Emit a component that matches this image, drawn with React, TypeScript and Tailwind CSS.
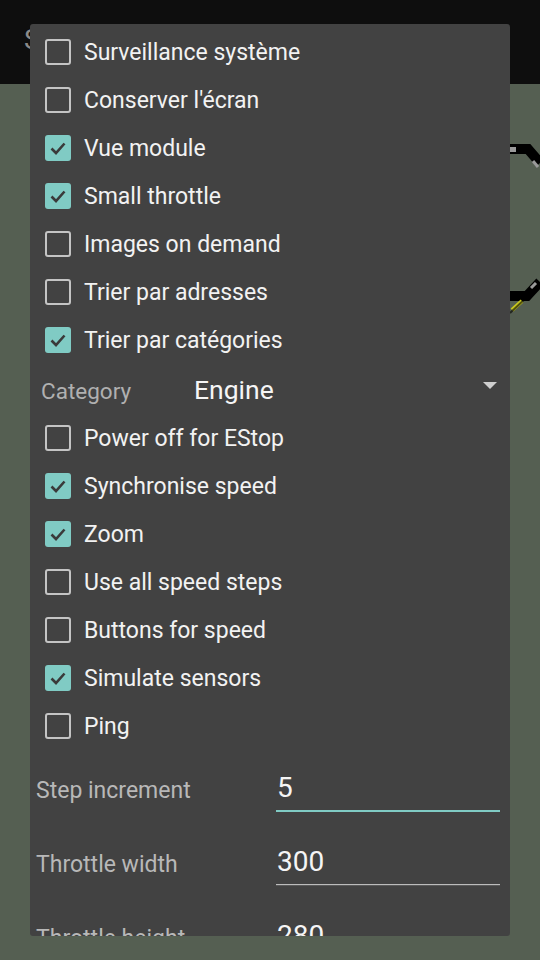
import React from "react";

const items1: [string, boolean][] = [
  ["Surveillance système", false],
  ["Conserver l'écran", false],
  ["Vue module", true],
  ["Small throttle", true],
  ["Images on demand", false],
  ["Trier par adresses", false],
  ["Trier par catégories", true],
];
const items2: [string, boolean][] = [
  ["Power off for EStop", false],
  ["Synchronise speed", true],
  ["Zoom", true],
  ["Use all speed steps", false],
  ["Buttons for speed", false],
  ["Simulate sensors", true],
  ["Ping", false],
];

function Box({ checked }: { checked: boolean }) {
  if (checked) {
    return (
      <div className="w-[26px] h-[26px] rounded-[3px] bg-[#80cbc4] flex items-center justify-center shrink-0">
        <svg width="20" height="20" viewBox="0 0 20 20">
          <path d="M3.5 10.5 L8 15 L16.5 5.5" fill="none" stroke="#3a3a3a" strokeWidth="2.6" />
        </svg>
      </div>
    );
  }
  return <div className="w-[26px] h-[26px] rounded-[3px] border-[2.5px] border-[#c4c4c4] shrink-0" />;
}

function Row({ label, checked }: { label: string; checked: boolean }) {
  return (
    <div className="h-[48px] flex items-center pl-[15px] shrink-0">
      <Box checked={checked} />
      <span className="ml-[13px] text-[23px] text-[#f2f2f2] leading-none">{label}</span>
    </div>
  );
}

function Edit({ label, value, active }: { label: string; value: string; active?: boolean }) {
  return (
    <div className="h-[74px] flex pl-[6px] pr-[10px] shrink-0 relative">
      <div className="w-[240px] pt-[29px] text-[23px] text-[#b8b8b8] leading-none whitespace-nowrap">{label}</div>
      <div className="flex-1 flex flex-col">
        <div className="h-[60px] pt-[24px] text-[28px] text-[#f5f5f5] leading-none pl-[1px]">{value}</div>
        {active ? (
          <div className="h-[2px] bg-[#80cbc4]" />
        ) : (
          <div className="flex flex-col">
            <div className="h-[1px] bg-[#bcbcbc]" />
            <div className="h-[1px] bg-[#5a5a5a]" />
          </div>
        )}
      </div>
    </div>
  );
}

export default function App() {
  return (
    <div
      className="relative w-[540px] h-[960px] bg-[#555f52] overflow-hidden"
      style={{ fontFamily: "Roboto, 'Noto Sans', sans-serif" }}
    >
      <div className="h-[84px] bg-[#0e0e0e] flex items-start pl-[24px] pt-[26px]">
        <span className="text-[28px] text-[#8a8a8a] leading-none">S</span>
      </div>
      <svg className="absolute left-[500px] top-[130px]" width="40" height="200" viewBox="0 0 40 200">
        <path d="M10 19 L28 19 L40 33" fill="none" stroke="#000" strokeWidth="10" />
        <rect x="10" y="17" width="6" height="5" fill="#9a9a9a" />
        <path d="M33 31 L38 37" stroke="#9a9a9a" strokeWidth="3" />
        <path d="M10 166 L27 166 L40 152" fill="none" stroke="#000" strokeWidth="10" />
        <path d="M31 158 L36 153" stroke="#9a9a9a" strokeWidth="3" />
        <path d="M12 180 L22 171" stroke="#c8c81e" strokeWidth="4" />
        <path d="M10 183 L26 168" stroke="#000" strokeWidth="2" fill="none" opacity="0.6" />
      </svg>
      <div className="absolute left-[30px] top-[24px] w-[480px] h-[912px] bg-[#424242] rounded-[3px] overflow-hidden flex flex-col pt-[4px]">
        {items1.map(([l, c]) => (
          <Row key={l} label={l} checked={c} />
        ))}
        <div className="h-[50px] flex items-center pl-[11px] pr-[13px] shrink-0">
          <div className="w-[153px] text-[22.5px] text-[#b0b0b0] leading-none pt-[5px]">Category</div>
          <div className="flex-1 text-[26.5px] text-[#f5f5f5] leading-none pt-[3px]">Engine</div>
          <svg width="14" height="8" viewBox="0 0 14 8" className="mb-[6px]">
            <path d="M0 0 L14 0 L7 7 Z" fill="#cfcfcf" />
          </svg>
        </div>
        {items2.map(([l, c]) => (
          <Row key={l} label={l} checked={c} />
        ))}
        <Edit label="Step increment" value="5" active />
        <Edit label="Throttle width" value="300" />
        <Edit label="Throttle height" value="280" />
      </div>
    </div>
  );
}
